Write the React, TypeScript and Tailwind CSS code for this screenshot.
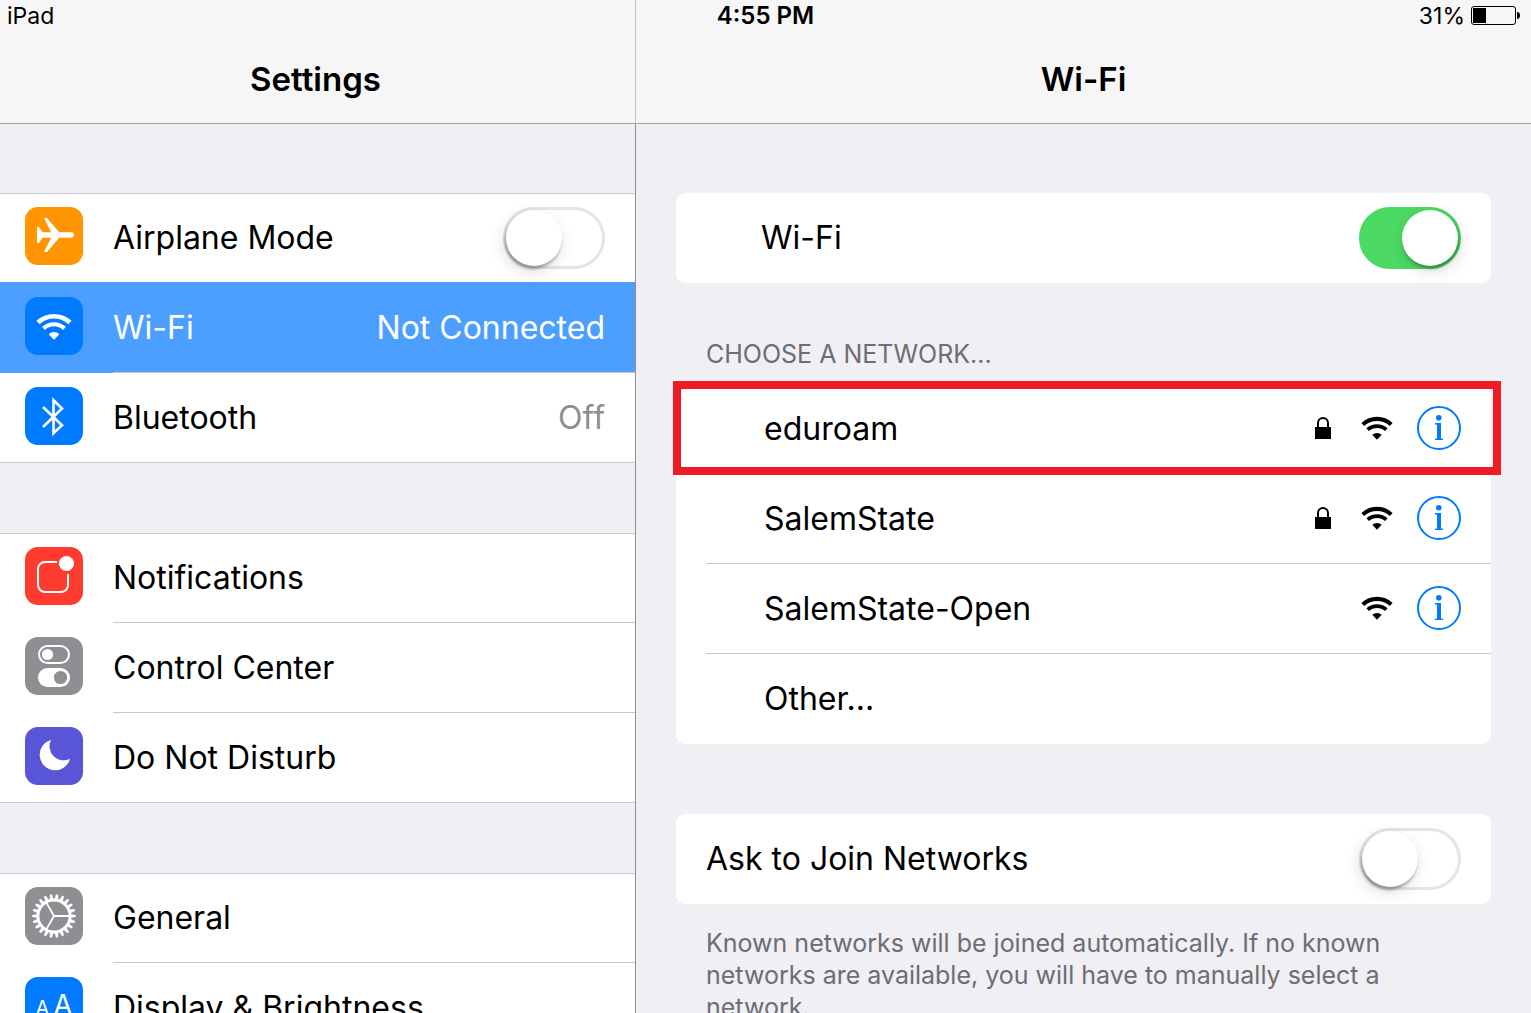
import type { ReactNode } from 'react';

interface SettingsItem {
  id: string;
  label: string;
  tile: string;
  icon: ReactNode;
  value?: string;
  toggle?: boolean;
  selected?: boolean;
}

interface Network {
  name: string;
  locked: boolean;
  highlighted?: boolean;
}

function AirplaneIcon() {
  return (
    <svg viewBox="0 0 58 58" className="size-full" fill="white" aria-hidden="true">
      <path d="M12 20H14L17.500 25.200H26.200L19 11H22L34.200 25.200H46C48 25.200 49 26.500 49 28S48 30.800 46 30.800H34.200L22 45H19L26.200 30.800H17.500L14 36H12V20Z" />
    </svg>
  );
}

function WifiShape() {
  return (
    <>
      <path d="M13 25.500A23.500 23.500 0 0 1 45 25.500" fill="none" stroke="currentColor" strokeWidth="4.600" />
      <path d="M18.500 31.400A15.400 15.400 0 0 1 39.500 31.400" fill="none" stroke="currentColor" strokeWidth="4.200" />
      <path d="M23.700 37.200A7.700 7.700 0 0 1 34.300 37.200L29 42.700Z" fill="currentColor" />
    </>
  );
}

function WifiTileIcon() {
  return (
    <svg viewBox="0 0 58 58" className="size-full text-white" aria-hidden="true">
      <WifiShape />
    </svg>
  );
}

function BluetoothIcon() {
  return (
    <svg viewBox="0 0 58 58" className="size-full" fill="none" stroke="white" strokeWidth="2.600" aria-hidden="true">
      <path d="M18 20L37 38.300L28.500 46.200V13.200L37 21.500L18 40" />
    </svg>
  );
}

function NotificationsIcon() {
  return (
    <svg viewBox="0 0 58 58" className="size-full" aria-hidden="true">
      <path
        d="M32 15H20A7 7 0 0 0 13 22V38A7 7 0 0 0 20 45H36A7 7 0 0 0 43 38V27"
        fill="none"
        stroke="white"
        strokeWidth="2"
      />
      <circle cx="41.500" cy="16.500" r="7.600" fill="white" />
    </svg>
  );
}

function ControlCenterIcon() {
  return (
    <svg viewBox="0 0 58 58" className="size-full" aria-hidden="true">
      <rect x="14" y="9" width="30" height="17" rx="8.500" fill="none" stroke="white" strokeWidth="2" />
      <circle cx="22.500" cy="17.500" r="5.600" fill="white" />
      <rect x="13" y="31" width="32" height="19" rx="9.500" fill="white" />
      <circle cx="35.500" cy="40.500" r="6.600" fill="#8e8e93" />
    </svg>
  );
}

function MoonIcon() {
  return (
    <svg viewBox="0 0 58 58" className="size-full" fill="white" aria-hidden="true">
      <path d="M26 13A15.400 15.400 0 1 0 45 31.700A14 14 0 0 1 26 13Z" />
    </svg>
  );
}

const TEETH = 22;

function GearIcon() {
  return (
    <svg viewBox="0 0 58 58" className="size-full" aria-hidden="true">
      <circle cx="29" cy="29" r="16" fill="none" stroke="white" strokeWidth="2.800" />
      {Array.from({ length: TEETH }, (_, i) => (
        <path
          key={i}
          d="M46 27.200L50.500 27.900Q51.500 29 50.500 30.100L46 30.800Z"
          fill="white"
          transform={`rotate(${(i * 360) / TEETH} 29 29)`}
        />
      ))}
      {[0, 120, 240].map((angle) => (
        <path key={angle} d="M29 29H45" stroke="white" strokeWidth="1.800" transform={`rotate(${angle} 29 29)`} />
      ))}
    </svg>
  );
}

function DisplayIcon() {
  return (
    <span className="flex size-full items-baseline justify-center gap-1 pt-2 leading-10 text-white" aria-hidden="true">
      <span className="text-[20px]">A</span>
      <span className="text-[28px]">A</span>
    </span>
  );
}

function LockIcon() {
  return (
    <svg viewBox="0 0 16 22" className="h-[22px] w-4" role="img" aria-label="Secured">
      <path d="M3 11V6A5 5 0 0 1 13 6V11" fill="none" stroke="black" strokeWidth="2" />
      <rect y="10" width="16" height="12" fill="black" />
    </svg>
  );
}

function InfoIcon() {
  return (
    <svg viewBox="0 0 44 44" className="size-11" fill="#007aff" aria-hidden="true">
      <circle cx="22" cy="22" r="21" fill="none" stroke="#007aff" strokeWidth="2" />
      <circle cx="21.800" cy="11.700" r="2.800" />
      <rect x="18" y="17" width="6" height="1.600" />
      <rect x="20" y="17" width="4" height="17" />
      <rect x="18" y="32.600" width="8" height="1.400" />
    </svg>
  );
}

function BatteryIcon() {
  return (
    <svg viewBox="0 0 49 20" className="h-5 w-[49px]" role="img" aria-label="Battery">
      <rect x="0.500" y="0.500" width="44" height="18" rx="2.500" fill="none" stroke="black" />
      <rect x="2" y="2" width="13" height="15" />
      <path d="M46 6C48 6 49 7.500 49 9.500S48 13 46 13Z" />
    </svg>
  );
}

function Toggle({ id, on = false }: { id: string; on?: boolean }) {
  return (
    <input
      id={id}
      type="checkbox"
      role="switch"
      defaultChecked={on}
      className="block h-[62px] w-[102px] shrink-0 cursor-pointer appearance-none rounded-full border-[3px] border-[#e5e5e5] bg-white before:block before:size-14 before:rounded-full before:bg-white before:shadow-[-1px_3px_3px_rgba(0,0,0,0.3),-2px_5px_16px_rgba(0,0,0,0.14)] before:content-[''] checked:border-[#4cd964] checked:bg-[#4cd964] checked:before:ml-10 checked:before:shadow-[1px_3px_3px_rgba(0,0,0,0.25),2px_5px_16px_rgba(0,0,0,0.14)]"
    />
  );
}

const groups: SettingsItem[][] = [
  [
    { id: 'airplane', label: 'Airplane Mode', tile: 'bg-[#ff9500]', icon: <AirplaneIcon />, toggle: true },
    { id: 'wifi', label: 'Wi-Fi', tile: 'bg-[#007aff]', icon: <WifiTileIcon />, value: 'Not Connected', selected: true },
    { id: 'bluetooth', label: 'Bluetooth', tile: 'bg-[#007aff]', icon: <BluetoothIcon />, value: 'Off' },
  ],
  [
    { id: 'notifications', label: 'Notifications', tile: 'bg-[#ff3b30]', icon: <NotificationsIcon /> },
    { id: 'control-center', label: 'Control Center', tile: 'bg-[#8e8e93]', icon: <ControlCenterIcon /> },
    { id: 'dnd', label: 'Do Not Disturb', tile: 'bg-[#5856d6]', icon: <MoonIcon /> },
  ],
  [
    { id: 'general', label: 'General', tile: 'bg-[#8e8e93]', icon: <GearIcon /> },
    { id: 'display', label: 'Display & Brightness', tile: 'bg-[#007aff]', icon: <DisplayIcon /> },
  ],
];

const networks: Network[] = [
  { name: 'eduroam', locked: true, highlighted: true },
  { name: 'SalemState', locked: true },
  { name: 'SalemState-Open', locked: false },
];

function SettingsRow({ item, divider }: { item: SettingsItem; divider: boolean }) {
  const content = (
    <>
      <span className={`mt-[14px] size-[58px] shrink-0 overflow-hidden rounded-[13px] ${item.tile}`}>
        {item.icon}
      </span>
      <span
        className={`ml-[30px] flex flex-1 items-center justify-between self-stretch border-b pr-[30px] ${
          divider ? 'border-[#c8c7cc]' : 'border-transparent'
        }`}
      >
        <span>{item.label}</span>
        {item.value && <span className={item.selected ? 'text-white' : 'text-[#8e8e93]'}>{item.value}</span>}
        {item.toggle && <Toggle id={item.id} />}
      </span>
    </>
  );

  if (item.toggle) {
    return (
      <label htmlFor={item.id} className="flex h-[90px] items-start pl-[25px]">
        {content}
      </label>
    );
  }

  return (
    <a
      href={`#${item.id}`}
      className={`flex items-start pl-[25px] ${
        item.selected ? '-mt-px h-[91px] bg-[#4c9fff] pt-px text-white' : 'h-[90px]'
      }`}
    >
      {content}
    </a>
  );
}

function Sidebar() {
  return (
    <aside className="flex w-[636px] shrink-0 flex-col">
      <header className="flex h-[124px] shrink-0 items-end justify-center border-r border-b border-r-[#c0c0c2] border-b-[#a5a5a8] bg-[#f6f6f6] pr-1 pb-6">
        <h1 className="text-[33px] leading-10 font-semibold">Settings</h1>
      </header>
      <nav className="flex flex-1 flex-col gap-[70px] overflow-hidden border-r border-[#8e8e93] pt-[69px]">
        {groups.map((items, g) => (
          <div key={g} className="bg-white shadow-[inset_0_1px_0_#c8c7cc,inset_0_-1px_0_#c8c7cc]">
            {items.map((item, i) => (
              <SettingsRow
                key={item.id}
                item={item}
                divider={i < items.length - 1 && !items[i + 1].selected}
              />
            ))}
          </div>
        ))}
      </nav>
    </aside>
  );
}

function NetworkRow({ network }: { network: Network }) {
  return (
    <li className="relative pl-[30px]">
      <div className="flex h-[90px] items-center border-b border-[#c8c7cc] pr-[30px] pb-px pl-[58px]">
        <span className="flex-1 pt-0.5">{network.name}</span>
        {network.locked && <LockIcon />}
        <svg viewBox="11 16 36 27" className="ml-[30px] h-6 w-8" role="img" aria-label="Signal strength">
          <WifiShape />
        </svg>
        <button type="button" className="ml-6 cursor-pointer" aria-label={`More about ${network.name}`}>
          <InfoIcon />
        </button>
      </div>
      {network.highlighted && (
        <div className="pointer-events-none absolute -top-[3px] -right-[10px] -bottom-px -left-[3px] border-8 border-[#ed1c24]" />
      )}
    </li>
  );
}

function WifiPane() {
  return (
    <main className="flex min-w-0 flex-1 flex-col">
      <header className="flex h-[124px] shrink-0 items-end justify-center border-b border-[#a5a5a8] bg-[#f6f6f6] pb-6">
        <h2 className="text-[33px] leading-10 font-semibold">Wi-Fi</h2>
      </header>
      <div className="flex-1 overflow-hidden px-10 pt-[69px]">
        <label htmlFor="wifi-power" className="flex h-[90px] items-center justify-between rounded-[9px] bg-white pr-[30px] pl-[85px]">
          Wi-Fi
          <Toggle id="wifi-power" on />
        </label>

        <h3 className="mt-[55px] mb-[14px] pl-[30px] text-[25px] leading-8 text-[#6d6d72]">CHOOSE A NETWORK...</h3>
        <ul className="rounded-[9px] bg-white">
          {networks.map((network) => (
            <NetworkRow key={network.name} network={network} />
          ))}
          <li>
            <button type="button" className="flex h-[90px] w-full cursor-pointer items-center pl-[88px]">
              Other...
            </button>
          </li>
        </ul>

        <label htmlFor="ask-join" className="mt-[70px] flex h-[90px] items-center justify-between rounded-[9px] bg-white px-[30px]">
          Ask to Join Networks
          <Toggle id="ask-join" />
        </label>
        <p className="mt-[23px] px-[30px] text-[25px] leading-8 text-[#6d6d72]">
          Known networks will be joined automatically. If no known networks are available, you will have to manually
          select a network.
        </p>
      </div>
    </main>
  );
}

export default function App() {
  return (
    <div className="relative flex h-screen overflow-hidden bg-[#efeff4] font-['Inter',sans-serif] text-[32px] leading-10 text-black">
      <Sidebar />
      <WifiPane />

      {/* Status bar sits on top of both headers */}
      <div className="absolute inset-x-0 top-0 grid h-8 grid-cols-3 items-center text-[23px] leading-8">
        <span className="pl-[7px]">iPad</span>
        <span className="text-center text-[24px] font-semibold">4:55 PM</span>
        <span className="flex items-center justify-end gap-[6px] pr-[11px]">
          31%
          <BatteryIcon />
        </span>
      </div>
    </div>
  );
}
